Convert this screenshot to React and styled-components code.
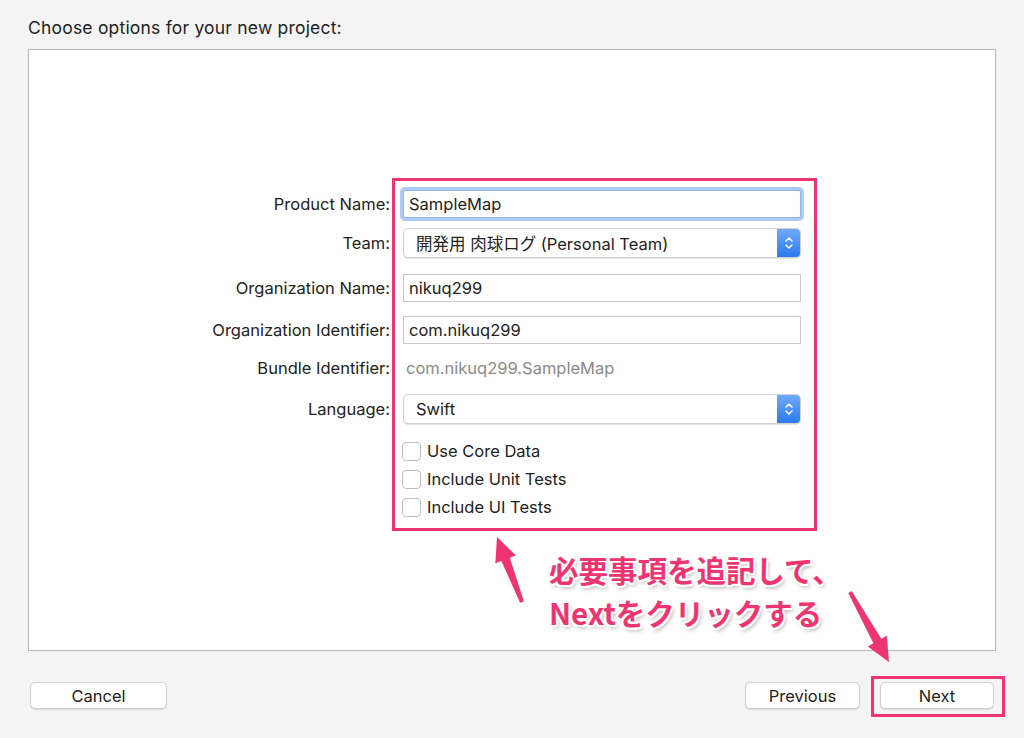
import React from 'react'
import styled, { createGlobalStyle } from 'styled-components'

const PINK = '#ef3571'

const GlobalStyle = createGlobalStyle`
  html, body {
    margin: 0;
    padding: 0;
    background: #f4f4f4;
  }
  body {
    font-family: Inter, "Noto Sans CJK JP", "Liberation Sans", sans-serif;
    color: #222;
  }
`

const Page = styled.div`
  position: relative;
  width: 1024px;
  height: 738px;
  box-sizing: border-box;
  padding: 18px 28px 0 28px;
  display: flex;
  flex-direction: column;
  overflow: hidden;
`

const Title = styled.div`
  font-size: 17.5px;
  letter-spacing: 0.2px;
  line-height: 20px;
  margin-bottom: 11px;
`

const Panel = styled.div`
  height: 602px;
  box-sizing: border-box;
  background: #fff;
  border: 1px solid #b9b9b9;
  padding-top: 134px;
`

const Form = styled.div`
  display: grid;
  grid-template-columns: 361px 398px;
  grid-template-rows: 40px 38px 51px 33px 44px 38px auto;
  column-gap: 13px;
  align-items: center;
`

const Label = styled.div`
  grid-column: 1;
  grid-row: ${p => p.$row};
  text-align: right;
  font-size: 16.5px;
  white-space: nowrap;
`

const Field = styled.div`
  grid-column: 2;
  grid-row: ${p => p.$row};
  display: flex;
  align-items: center;
`

const Input = styled.div`
  width: 100%;
  height: 28px;
  box-sizing: border-box;
  border: 1px solid ${p => (p.$focused ? '#8fb5e6' : '#c9c9c9')};
  box-shadow: ${p => (p.$focused ? '0 0 0 3px #aecbf1' : 'none')};
  border-radius: ${p => (p.$focused ? '2px' : '0')};
  padding: 0 5px;
  display: flex;
  align-items: center;
  font-size: 16.5px;
  background: #fff;
`

const Plain = styled.div`
  font-size: 16.5px;
  color: #8a8a8a;
  padding-left: 3px;
`

const Popup = styled.div`
  width: 100%;
  height: 30px;
  box-sizing: border-box;
  border: 1px solid #d0d0d0;
  border-radius: 5px;
  box-shadow: 0 1px 1px rgba(0, 0, 0, 0.12);
  display: flex;
  align-items: stretch;
  background: #fff;
  font-size: 16.5px;
  overflow: hidden;
`

const PopupText = styled.div`
  flex: 1;
  display: flex;
  align-items: center;
  padding-left: 12px;
`

const Stepper = styled.div`
  width: 23px;
  background: linear-gradient(#6eaaf8, #2c79ef);
  display: flex;
  align-items: center;
  justify-content: center;
`

const Checks = styled.div`
  grid-column: 2;
  grid-row: 7;
  display: flex;
  flex-direction: column;
  padding-top: 9px;
  margin-left: -1px;
`

const CheckRow = styled.div`
  height: 28px;
  display: flex;
  align-items: center;
  gap: 6px;
  font-size: 16.5px;
`

const Box = styled.div`
  width: 19px;
  height: 19px;
  box-sizing: border-box;
  border: 1px solid #bdbdbd;
  border-radius: 4px;
  background: #fff;
`

const Highlight = styled.div`
  grid-column: 2;
  grid-row: 1 / span 7;
  align-self: stretch;
  margin: -6px -16px -10px -11px;
  border: 3px solid ${PINK};
  pointer-events: none;
`

const Footer = styled.div`
  display: flex;
  justify-content: space-between;
  margin-top: 31px;
  padding: 0 2px;
`

const Group = styled.div`
  display: flex;
  gap: 20px;
`

const Button = styled.div`
  position: relative;
  width: ${p => p.$w}px;
  height: 27px;
  box-sizing: border-box;
  background: #fff;
  border: 1px solid #cfcfcf;
  border-radius: 5px;
  box-shadow: 0 1px 1px rgba(0, 0, 0, 0.1);
  display: flex;
  align-items: center;
  justify-content: center;
  font-size: 16.5px;
`

const ButtonFrame = styled.div`
  position: absolute;
  left: -10px;
  right: -12px;
  top: -7px;
  bottom: -9px;
  border: 3px solid ${PINK};
  pointer-events: none;
`

const Note = styled.div`
  position: absolute;
  left: 549px;
  top: 548px;
  font-family: "Noto Sans CJK JP", "Liberation Sans", sans-serif;
  font-weight: 700;
  font-size: 29.5px;
  line-height: 43px;
  color: ${PINK};
  text-shadow: -2px 0 0 #fff, 2px 0 0 #fff, 0 -2px 0 #fff, 0 2px 0 #fff,
    -1.5px -1.5px 0 #fff, 1.5px 1.5px 0 #fff, -1.5px 1.5px 0 #fff,
    1.5px -1.5px 0 #fff, 2px 3px 4px rgba(0, 0, 0, 0.35);
`

const Arrows = styled.svg`
  position: absolute;
  left: 0;
  top: 0;
  pointer-events: none;
`

const Chevrons = () => (
  <svg width="10" height="16" viewBox="0 0 10 16">
    <path
      d="M2 6 L5 3 L8 6 M2 10 L5 13 L8 10"
      fill="none"
      stroke="#fff"
      strokeWidth="1.5"
      strokeLinecap="round"
      strokeLinejoin="round"
    />
  </svg>
)

const arrow = (x1, y1, x2, y2) => {
  const dx = x2 - x1
  const dy = y2 - y1
  const len = Math.hypot(dx, dy)
  const ux = dx / len
  const uy = dy / len
  const nx = -uy
  const ny = ux
  const head = 24
  const bx = x2 - ux * head
  const by = y2 - uy * head
  const pts = [
    [x1 + nx * 2, y1 + ny * 2],
    [bx + nx * 4.5, by + ny * 4.5],
    [bx + nx * 11, by + ny * 11],
    [x2, y2],
    [bx - nx * 11, by - ny * 11],
    [bx - nx * 4.5, by - ny * 4.5],
    [x1 - nx * 2, y1 - ny * 2],
  ]
  return pts.map(p => p.map(v => v.toFixed(1)).join(',')).join(' ')
}

const App = () => {
  return (
    <>
      <GlobalStyle />
      <Page>
        <Title>Choose options for your new project:</Title>
        <Panel>
          <Form>
            <Label $row={1}>Product Name:</Label>
            <Field $row={1}>
              <Input $focused>SampleMap</Input>
            </Field>

            <Label $row={2}>Team:</Label>
            <Field $row={2}>
              <Popup>
                <PopupText>開発用 肉球ログ (Personal Team)</PopupText>
                <Stepper>
                  <Chevrons />
                </Stepper>
              </Popup>
            </Field>

            <Label $row={3}>Organization Name:</Label>
            <Field $row={3}>
              <Input>nikuq299</Input>
            </Field>

            <Label $row={4}>Organization Identifier:</Label>
            <Field $row={4}>
              <Input>com.nikuq299</Input>
            </Field>

            <Label $row={5}>Bundle Identifier:</Label>
            <Field $row={5}>
              <Plain>com.nikuq299.SampleMap</Plain>
            </Field>

            <Label $row={6}>Language:</Label>
            <Field $row={6}>
              <Popup>
                <PopupText>Swift</PopupText>
                <Stepper>
                  <Chevrons />
                </Stepper>
              </Popup>
            </Field>

            <Checks>
              {['Use Core Data', 'Include Unit Tests', 'Include UI Tests'].map(t => (
                <CheckRow key={t}>
                  <Box />
                  {t}
                </CheckRow>
              ))}
            </Checks>

            <Highlight />
          </Form>
        </Panel>
        <Footer>
          <Button $w={137}>Cancel</Button>
          <Group>
            <Button $w={115}>Previous</Button>
            <Button $w={114}>
              Next
              <ButtonFrame />
            </Button>
          </Group>
        </Footer>

        <Arrows width="1024" height="738">
          <polygon points={arrow(522, 602, 497, 537)} fill={PINK} />
          <polygon points={arrow(850, 592, 889, 662)} fill={PINK} />
        </Arrows>
        <Note>
          必要事項を追記して、
          <br />
          Nextをクリックする
        </Note>
      </Page>
    </>
  )
}

export default App
